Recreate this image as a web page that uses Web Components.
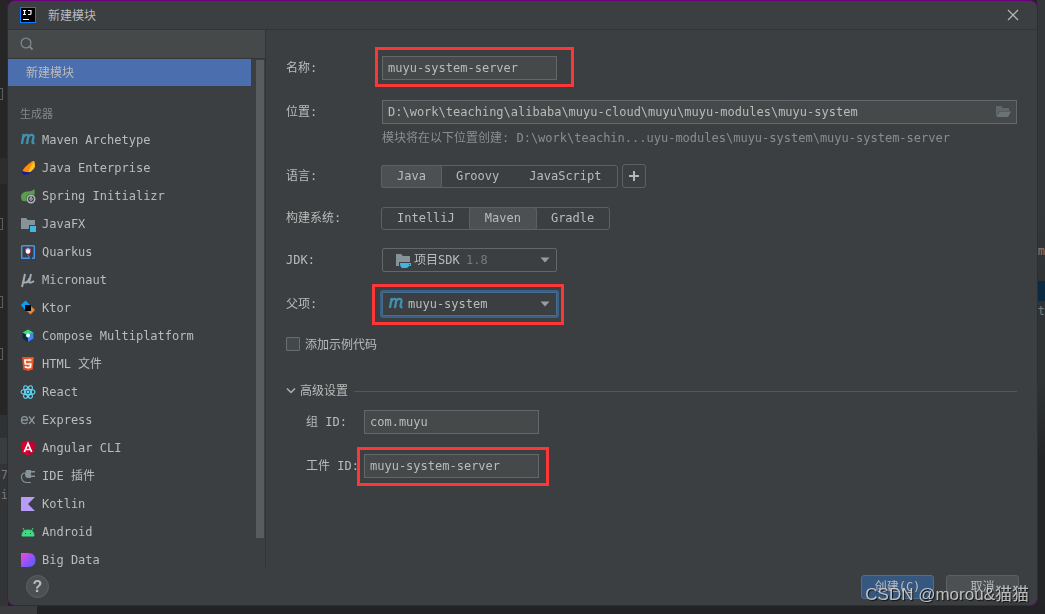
<!DOCTYPE html>
<html lang="zh-CN">
<head>
<meta charset="utf-8">
<title>新建模块</title>
<style>
  body {
    margin: 0;
    min-height: 100vh;
    background: #2b2b2b;
    color: #bbbbbb;
    font: 12px/16px "DejaVu Sans Mono", "Noto Sans CJK SC", monospace;
    overflow: hidden;
  }
</style>
</head>
<body>
<module-page></module-page>
<script>
const ICONS = {
  logo: `<rect width="16" height="16" fill="#087cfa"/><rect x="1" y="1" width="14" height="14" fill="#000"/><path d="M3 3.500h3M4.500 3.500v4M3 7.500h3M8 3.500h3v3q0 1-1 1H8M3 12.500h6" fill="none" stroke="#fff" stroke-width="1.200"/>`,
  search: `<circle cx="7" cy="7" r="4.900" fill="none" stroke="#7f878b" stroke-width="1.300"/><path d="M10.500 10.500l3 3" stroke="#7f878b" stroke-width="1.800"/>`,
  close: `<path d="M3 3l10 10M13 3L3 13" stroke="#b5b7b8" stroke-width="1.200"/>`,
  maven: `<path d="M2.700 3L.900 13M2.300 6.500C3.500 3.300 7.800 3 7.200 6L5.900 13M7 6.500C8.200 3.300 13 3 12.500 6L11.500 11Q11.400 12.400 13.500 12" transform="translate(1 -1)" fill="none" stroke="#4091b1" stroke-width="2.300"/>`,
  enterprise: `<path d="M12.500 1Q4 7 2.500 11l6 2Q14 11 14 1z" fill="#ff8d0a"/><path d="M14.500 1Q10 6 8.500 12.500q5-2 6.500-6z" fill="#ffc323"/><path d="M1 11.500l11 1q-4 3-9 2z" fill="#17208e"/>`,
  spring: `<path d="M14.500 1Q12 3.500 7 3.500Q1 4 1 9q0 3 2 4 8 1 11-4 1-4 .5-8z" fill="#599e48"/><circle cx="11" cy="11" r="5" fill="#3c3f41"/><circle cx="11" cy="11" r="3.700" fill="none" stroke="#aeb9c0" stroke-width="1.500"/><circle cx="11" cy="11" r="1.300" fill="none" stroke="#aeb9c0"/><path d="M11 8v3" stroke="#aeb9c0"/>`,
  javafx: `<path d="M1 2h5l2 2h7v9H1z" fill="#87939a"/><path d="M9 9h7v7H9z" fill="#3c3f41"/><path d="M10 10h6v6h-6z" fill="#40b6e0"/>`,
  quarkus: `<path d="M9 14.300h-6.500q-.8 0-.8-.8v-11q0-.8.800-.8h11q.8 0 .8.800v11q0 .8-.8.800H12" fill="none" stroke="#4695eb" stroke-width="1.500"/><path d="M8 3.500l3 1.500v3l-3 3-3-3V5z" fill="#c82057"/><path d="M8 3.500l-3 2.500 3 1.500 3-1.500z" fill="#71b8eb"/><circle cx="8" cy="7.500" r="2.200" fill="#fff"/><path d="M8 11l2 4" stroke="#4695eb"/>`,
  micronaut: `<path d="M5 2L2 15M5 2L3.600 8.500Q3.500 11 6 10.500 8.500 10 9.500 6M11 2L9.300 9.500Q9.700 12 14 9" fill="none" stroke="#a0aab0" stroke-width="2"/>`,
  ktor: `<path d="M1 5l4.500-4.500L11 6l-5 5z" fill="#08a2fb"/><path d="M10 5l5 5-4.500 4.500L5 9z" fill="#f5832a"/><path d="M5 10l5-5 2 2-5 5z" fill="#a44caf"/><path d="M5 5h6v6H5z" fill="#000"/>`,
  compose: `<path d="M8 1.500l5.500 3v6L8 14 2.500 10.500v-6z" fill="#083042"/><path d="M8 1.500l5.500 3L8 7.500 2.500 4.500z" fill="#3ddc84"/><path d="M13.500 4.500v6L8 14v-7z" fill="#4285f4"/><circle cx="8" cy="7.500" r="2" fill="#fff"/>`,
  html: `<path d="M2 1h12l-1.200 12.500L8 15l-4.800-1.500z" fill="#e44d26"/><path d="M8 2h5l-1 10.500L8 14z" fill="#f16529"/><path d="M11.300 4H5l.3 4h5.400l-.3 3-2.400.700-2.400-.7-.1-1" fill="none" stroke="#fff" stroke-width="1.700"/>`,
  react: `<g fill="none" stroke="#61dafb" stroke-width="1.100"><ellipse cx="8" cy="8" rx="7" ry="2.700"/><ellipse cx="8" cy="8" rx="7" ry="2.700" transform="rotate(60 8 8)"/><ellipse cx="8" cy="8" rx="7" ry="2.700" transform="rotate(120 8 8)"/></g><circle cx="8" cy="8" r="1.400" fill="#61dafb"/>`,
  express: `<path d="M1.500 8h6Q7.500 4.600 4.500 4.600T1.500 8Q1.500 11.700 4.500 11.700 6.700 11.700 7.300 10.300M9 4.500l5.500 7.300M14.500 4.500L9 11.800" fill="none" stroke="#8b979e" stroke-width="1.300"/>`,
  angular: `<path d="M8 .5l7 2.500-1.100 9.500L8 15.700l-5.900-3.200L1 3z" fill="#dd0031"/><path d="M8 .5l7 2.500-1.100 9.500L8 15.700z" fill="#c3002f"/><path d="M4.300 12L8 3.500l3.700 8.500M5.500 9.500h5" fill="none" stroke="#fff" stroke-width="1.700"/>`,
  plugin: `<path d="M6 2h5v8H8Q5 10 5 6zM11 3h4v1.500h-4zM11 7.500h4V9h-4z" fill="#87939a"/><path d="M5 5Q1.500 5 1.500 9q0 5 5 5.500h4.500" fill="none" stroke="#87939a" stroke-width="1.200"/>`,
  kotlin: `<path d="M1 1h14L8 8l7 7H1z" fill="#b99bf8"/>`,
  android: `<path d="M2 12q0-6 6-6t6 6zM4.500 7l-1.500-3M11.500 7l1.500-3" fill="#3ddc84" stroke="#3ddc84"/><path d="M5 9h1v1H5zM10 9h1v1h-1z" fill="#3c3f41"/>`,
  bigdata: `<defs><linearGradient id="g" x2="1" y2="1"><stop offset=".1" stop-color="#e749df"/><stop offset=".7" stop-color="#7059ff"/></linearGradient></defs><path d="M1 1h7q7.500 0 7.500 7T8 15H1z" fill="url(#g)"/>`,
  folder: `<path d="M1 2h5l2 2h6v3H4l-2 5H1z" fill="#616769"/><path d="M4.500 7.500H16L13 13H1.500z" fill="#6c7375"/>`,
  sdk: `<path d="M1 2h5l2 2h7v10H1z" fill="#87939a"/><path d="M4 10h12v6H4z" fill="#3c3f41"/><path d="M5 11h11v3h-2q-1 2-3 2H8q-3 0-3-5z" fill="#40b6e0"/><path d="M14 12h1v1h-1z" fill="#3c3f41"/>`,
  plus: `<path d="M3 8h10M8 3v10" stroke="#b5b7b8" stroke-width="2"/>`,
  chevron: `<path d="M4 5.500l4 4 4-4" fill="none" stroke="#afb1b3" stroke-width="1.500"/>`,
  arrow: `<path d="M3.500 5.500h9L8 10.500z" fill="#9a9da0"/>`
};

function define(name, markup, setup, observed = []) {
  const template = document.createElement("template");
  template.innerHTML = markup;
  customElements.define(name, class extends HTMLElement {
    static observedAttributes = observed;
    constructor() {
      super();
      this.attachShadow({ mode: "open" }).append(template.content.cloneNode(true));
    }
    connectedCallback() { if (setup) setup(this, this.shadowRoot); }
    attributeChangedCallback() { if (setup) setup(this, this.shadowRoot); }
  });
}

define("ide-icon", `
  <style>:host{display:block;flex:none;width:16px;height:16px} svg{display:block;width:100%;height:100%}</style>
  <svg viewBox="0 0 16 16" aria-hidden="true"></svg>`,
  (host, root) => { root.querySelector("svg").innerHTML = ICONS[host.getAttribute("name")] || ""; }, ["name"]);

/* Slivers of the editor window that stay visible round the dialog */
define("editor-backdrop", `
  <style>
    :host{position:fixed;inset:0;display:grid;grid-template:1fr 8px / 8px 1fr 8px;background:#222324}
    .left,.right{overflow:hidden;display:flex;flex-direction:column;color:#77797b}
    .left i{flex:none;width:3px;height:12px;box-sizing:border-box;border:1px solid #5c5e60;border-left:0;margin-top:118px}
    .left i:first-child{margin-top:88px}
    .left i:nth-child(3){margin-top:66px}
    .left i:nth-child(4){margin-top:40px}
    .left{background:linear-gradient(#262626 158px,#2d2d2e 158px 184px,#262626 184px 415px,#303132 415px 438px,#3a3c3e 438px 464px,#323435 464px)}
    span{direction:rtl;white-space:nowrap;height:20px}
    .left span:first-of-type{margin-top:107px}
    .right{background:linear-gradient(#34373a 0 200px,#303334 281px,#0a2a42 281px 301px,#303334 301px 380px,#232425 460px)}
    .right span:first-child{margin-top:243px;color:#a07860}
    .right span:last-child{margin-top:40px}
    .foot{grid-column:1/-1;background:linear-gradient(90deg,#3a3c3e 37px,#222324 37px)}
  </style>
  <div class="left"><i></i><i></i><i></i><i></i><span>57</span><span>ui</span></div>
  <div></div>
  <div class="right"><span>m</span><span>st</span></div>
  <div class="foot"></div>`);

define("dialog-title", `
  <style>
    :host{display:flex;align-items:center;height:28px;padding:0 16px 0 12px;border-bottom:1px solid #323435}
    h1{flex:1;margin:0 0 0 12px;padding-top:2px;font:inherit}
    button{padding:0;border:0;background:none}
  </style>
  <ide-icon name="logo"></ide-icon><h1><slot></slot></h1>
  <button aria-label="关闭"><ide-icon name="close"></ide-icon></button>`);

define("generator-item", `
  <style>
    :host{display:flex;align-items:center;height:28px;gap:6px;padding-left:12px}
    a{color:inherit;text-decoration:none;white-space:pre}
  </style>
  <ide-icon></ide-icon><a href="#"><slot></slot></a>`,
  (host, root) => root.querySelector("ide-icon").setAttribute("name", host.getAttribute("icon")));

define("generator-sidebar", `
  <style>
    :host{display:flex;flex-direction:column;border-right:1px solid #323435;min-height:0}
    .search{display:flex;align-items:center;height:28px;padding-left:11px;background:#45494a;border-bottom:1px solid #323435}
    input{flex:1;min-width:0;border:0;outline:0;background:none;color:inherit;font:inherit}
    .body{flex:1;display:flex;min-height:0}
    nav{flex:1;overflow:hidden}
    .current{display:block;height:27px;padding-left:18px;line-height:29px;background:#4b6eaf;color:inherit;text-decoration:none}
    h2{margin:0;padding:19px 0 5px 12px;font:11px/16px "Noto Sans CJK SC",sans-serif;color:#858789}
    .track{width:8px;margin:1px 1px 30px 5px;background:#595b5d}
  </style>
  <div class="search"><ide-icon name="search"></ide-icon><input aria-label="搜索"></div>
  <div class="body">
    <nav><a class="current" href="#">新建模块</a><h2>生成器</h2><slot></slot></nav>
    <div class="track"></div>
  </div>`);

define("form-row", `
  <style>
    :host{display:grid;grid-template-columns:var(--label,96px) minmax(0,1fr);align-items:center;margin-top:20px;min-height:24px}
    :host([tight]){margin-top:18px}
    .control{display:flex;align-items:center;gap:4px}
  </style>
  <slot name="label"></slot><div class="control"><slot></slot></div>`);

define("red-mark", `
  <style>
    :host{display:flex;position:relative}
    .frame{position:absolute;inset:var(--reach);border:3px solid #fb3737;pointer-events:none}
  </style>
  <slot></slot><div class="frame"></div>`);

define("segment-group", `
  <style>
    :host{display:block}
    fieldset{display:flex;margin:0 0 0 -1px;padding:0;border:1px solid #5e6162;border-radius:3px}
    label{display:grid;height:21px;align-items:center}
    label>*{grid-area:1/1}
    input{appearance:none;margin:0;width:100%;height:100%}
    input:checked{background:#4c5052;box-shadow:0 0 0 1px #5e6162;border-radius:2px}
    span{padding:0 15px;z-index:1}
  </style>
  <fieldset></fieldset>`,
  (host, root) => {
    const set = root.querySelector("fieldset");
    set.setAttribute("aria-label", host.getAttribute("label"));
    set.replaceChildren();
    host.getAttribute("options").split(",").forEach(text => {
      const label = document.createElement("label");
      label.innerHTML = `<input type="radio" name="choice"><span></span>`;
      label.lastChild.textContent = text;
      label.firstChild.checked = text === host.getAttribute("value");
      set.append(label);
    });
  });

/* Frame of a drop-down: the icon and the arrow share one grid cell with the select */
define("combo-box", `
  <style>
    :host{display:grid;width:175px;height:24px;align-items:center;box-sizing:border-box;border:1px solid #646769;border-radius:2px}
    :host([focused]){border-color:#466d94;box-shadow:0 0 0 2px #3d6185;border-radius:1px}
    .lead,.arrow,::slotted(*){grid-area:1/1}
    .lead{margin-left:var(--icon-left,5px);pointer-events:none;z-index:1}
    .arrow{justify-self:end;margin-right:3px;pointer-events:none;z-index:1}
    ::slotted(select){appearance:none;width:100%;height:22px;margin:0;border:0;outline:0;background:none;color:inherit;font:inherit}
    ::slotted(span){pointer-events:none;color:#777a7c}
  </style>
  <ide-icon class="lead"></ide-icon><slot></slot><ide-icon class="arrow" name="arrow"></ide-icon>`,
  (host, root) => root.querySelector(".lead").setAttribute("name", host.getAttribute("icon")));

define("water-mark", `
  <style>:host{position:absolute;right:8px;bottom:-2px;font:17px/24px "Liberation Sans","Noto Sans CJK SC",sans-serif;color:rgba(225,225,225,.8);text-shadow:1px 1px 1px #111;white-space:nowrap;pointer-events:none}</style>
  <slot></slot>`);

define("module-dialog", `
  <style>
    :host{position:relative;display:flex;flex-direction:column;box-sizing:border-box;margin:0 7px;min-height:calc(100vh - 8px);background:#3c3f41;border:1px solid #6b007e;border-radius:8px}
    main{flex:1;display:grid;grid-template:minmax(0,1fr) / 258px minmax(0,1fr);min-height:0}
    generator-sidebar{height:538px}
    form{padding:6px 20px 0}
    input:not([type]){box-sizing:border-box;width:175px;height:24px;padding:0 5px;border:1px solid #646769;background:#45494a;color:inherit;font:inherit;outline:0}
    .path{display:grid;flex:1;align-items:center}
    .path>*{grid-area:1/1}
    .path input:not([type]){width:100%}
    .path button{justify-self:end;margin-right:6px;padding:0;border:0;background:none}
    .hint{margin:0 0 -8px 96px;line-height:28px;color:#8a8d8f;white-space:nowrap}
    .add{display:grid;place-items:center;width:24px;height:24px;padding:0;border:1px solid #5e6162;border-radius:3px;background:none}
    .check{display:flex;align-items:center;gap:5px;height:16px;margin-top:20px}
    .check input{appearance:none;box-sizing:border-box;width:14px;height:14px;margin:0;border:1px solid #6b6e70;border-radius:1px;background:#43494a}
    .check label{padding-top:2px}
    .advanced{display:flex;align-items:center;gap:6px;height:38px;margin-top:20px}
    .advanced button{display:flex;align-items:center;padding:0;border:0;background:none;color:inherit;font:inherit;margin-left:-3px;gap:1px}
    .advanced hr{flex:1;margin:0;border:0;border-top:1px solid #555859}
    .nested{--label:58px;padding-left:20px}
    .nested form-row:first-child{margin-top:0}
    label{white-space:pre}
    .jdk{--icon-left:12px}
    #jdk{padding:0 31px}
    .jdk span{margin-left:83px}
    #parent{padding:0 25px}
    footer{display:flex;align-items:center;gap:12px;height:37px;padding:0 18px}
    footer button{box-sizing:border-box;width:73px;height:24px;padding:0;border:1px solid #5e6162;border-radius:3px;background:#4c5052;color:inherit;font:inherit}
    footer .primary{background:#365880;border-color:#4c708c}
    footer .help{width:23px;height:23px;margin-right:auto;border-radius:50%;font:bold 16px/20px "Liberation Sans",sans-serif}
  </style>
  <dialog-title>新建模块</dialog-title>
  <main>
    <generator-sidebar>
      <generator-item icon="maven">Maven Archetype</generator-item>
      <generator-item icon="enterprise">Java Enterprise</generator-item>
      <generator-item icon="spring">Spring Initializr</generator-item>
      <generator-item icon="javafx">JavaFX</generator-item>
      <generator-item icon="quarkus">Quarkus</generator-item>
      <generator-item icon="micronaut">Micronaut</generator-item>
      <generator-item icon="ktor">Ktor</generator-item>
      <generator-item icon="compose">Compose Multiplatform</generator-item>
      <generator-item icon="html">HTML 文件</generator-item>
      <generator-item icon="react">React</generator-item>
      <generator-item icon="express">Express</generator-item>
      <generator-item icon="angular">Angular CLI</generator-item>
      <generator-item icon="plugin">IDE 插件</generator-item>
      <generator-item icon="kotlin">Kotlin</generator-item>
      <generator-item icon="android">Android</generator-item>
      <generator-item icon="bigdata">Big Data</generator-item>
    </generator-sidebar>
    <form>
      <form-row><label slot="label" for="name">名称:</label><red-mark style="--reach:-9px -17px -7px -7px"><input id="name" value="muyu-system-server"></red-mark></form-row>
      <form-row><label slot="label" for="path">位置:</label>
        <div class="path"><input id="path" value="D:\\work\\teaching\\alibaba\\muyu-cloud\\muyu\\muyu-modules\\muyu-system"><button type="button" aria-label="浏览"><ide-icon name="folder"></ide-icon></button></div></form-row>
      <p class="hint">模块将在以下位置创建: D:\\work\\teachin...uyu-modules\\muyu-system\\muyu-system-server</p>
      <form-row><span slot="label">语言:</span><segment-group label="语言" options="Java,Groovy,JavaScript" value="Java"></segment-group><button class="add" type="button" aria-label="添加语言"><ide-icon name="plus"></ide-icon></button></form-row>
      <form-row tight><span slot="label">构建系统:</span><segment-group label="构建系统" options="IntelliJ,Maven,Gradle" value="Maven"></segment-group></form-row>
      <form-row tight><label slot="label" for="jdk">JDK:</label><combo-box class="jdk" icon="sdk"><select id="jdk"><option>项目SDK</option></select><span>1.8</span></combo-box></form-row>
      <form-row><label slot="label" for="parent">父项:</label><red-mark style="--reach:-8px -7px -9px -10px"><combo-box focused icon="maven"><select id="parent"><option>muyu-system</option></select></combo-box></red-mark></form-row>
      <div class="check"><input type="checkbox" id="sample"><label for="sample">添加示例代码</label></div>
      <div class="advanced"><button type="button" aria-expanded="true"><ide-icon name="chevron"></ide-icon>高级设置</button><hr></div>
      <div class="nested">
        <form-row><label slot="label" for="group">组 ID:</label><input id="group" value="com.muyu"></form-row>
        <form-row><label slot="label" for="artifact">工件 ID:</label><red-mark style="--reach:-7px -10px -8px -7px"><input id="artifact" value="muyu-system-server"></red-mark></form-row>
      </div>
    </form>
  </main>
  <footer><button class="help" aria-label="帮助">?</button><button class="primary">创建(<u>C</u>)</button><button>取消</button></footer>
  <water-mark>CSDN @morou&amp;猫猫</water-mark>`);

define("module-page", `
  <style>:host{display:block}</style>
  <editor-backdrop></editor-backdrop><module-dialog></module-dialog>`);
</script>
</body>
</html>
